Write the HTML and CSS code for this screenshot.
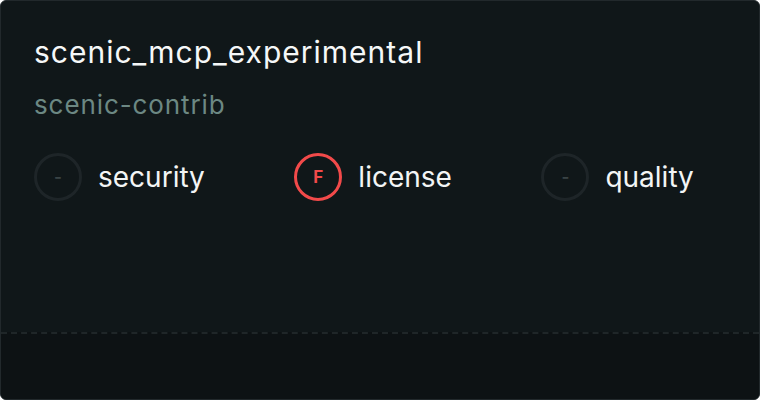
FILE: index.html
```html
<!DOCTYPE html>
<html>
<head>
<meta charset="utf-8">
<link rel="stylesheet" href="styles.css">
</head>
<body>
<div class="card">
  <div class="main">
    <div class="title">scenic_mcp_experimental</div>
    <div class="subtitle">scenic-contrib</div>
    <div class="scores">
      <div class="score">
        <span class="ring ring-none">-</span>
        <span class="label">security</span>
      </div>
      <div class="score">
        <span class="ring ring-fail">F</span>
        <span class="label">license</span>
      </div>
      <div class="score">
        <span class="ring ring-none">-</span>
        <span class="label">quality</span>
      </div>
    </div>
  </div>
  <div class="footer"></div>
</div>
</body>
</html>
```
FILE: styles.css
```css
html, body {
  margin: 0;
  padding: 0;
  background: #ffffff;
}
body {
  width: 760px;
  height: 400px;
  font-family: Inter, "Noto Sans", sans-serif;
}
.card {
  box-sizing: border-box;
  width: 760px;
  height: 400px;
  border: 1px solid #22292c;
  border-radius: 6px;
  background: #101719;
  display: flex;
  flex-direction: column;
  overflow: hidden;
}
.main {
  flex: 1;
  padding: 31px 33px 0 33px;
}
.title {
  color: #f6f8f8;
  font-size: 30px;
  line-height: 40px;
  letter-spacing: 1px;
}
.subtitle {
  color: #6c8883;
  font-size: 26px;
  line-height: 32px;
  letter-spacing: 0.9px;
  margin-top: 17px;
}
.scores {
  display: flex;
  align-items: center;
  gap: 89.5px;
  margin-top: 32px;
}
.score {
  display: flex;
  align-items: center;
  gap: 16px;
}
.ring {
  box-sizing: border-box;
  width: 48px;
  height: 48px;
  border-radius: 50%;
  border: 3px solid #1e2528;
  display: flex;
  align-items: center;
  justify-content: center;
  font-size: 17px;
  font-weight: 700;
}
.ring-none {
  color: #3a4345;
  font-weight: 600;
}
.ring-fail {
  border-color: #f24a4a;
  color: #f24a4a;
}
.label {
  color: #f3f5f5;
  font-size: 28px;
  line-height: 32px;
}
.footer {
  height: 65px;
  border-top: 2px dashed #1f2628;
  background: #0d1214;
}
```
